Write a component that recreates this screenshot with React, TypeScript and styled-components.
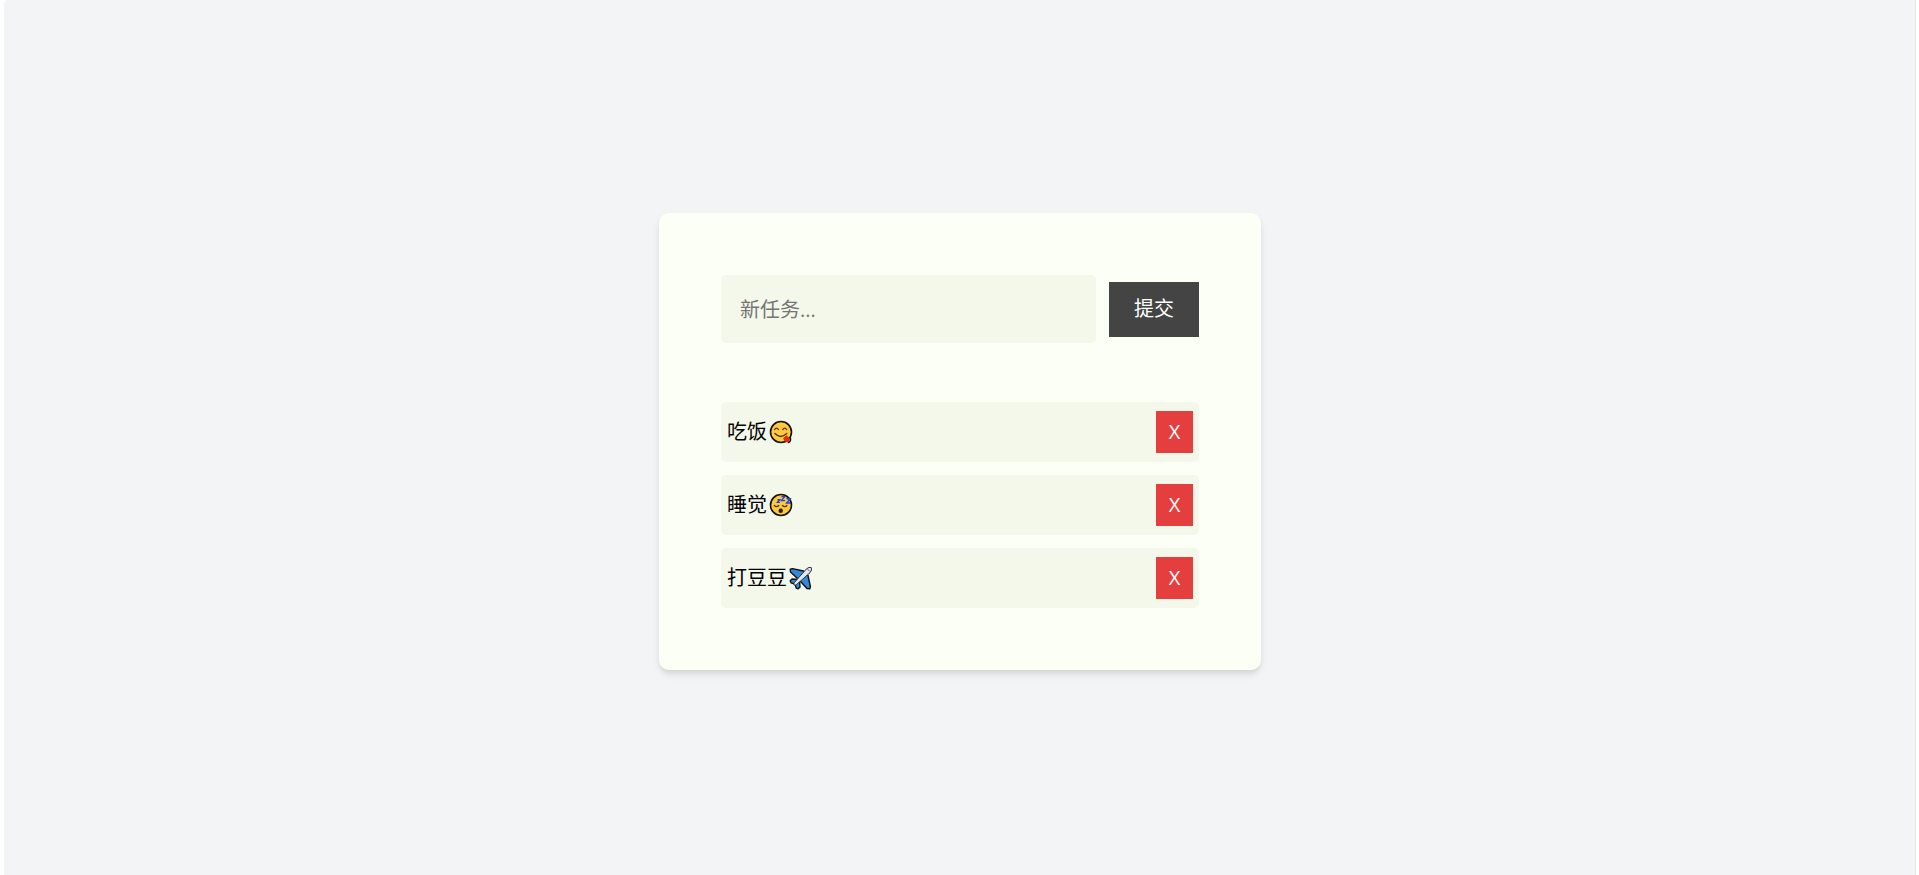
import React, { FormEvent, useState } from "react";
import styled, { createGlobalStyle } from "styled-components";

const GlobalStyle = createGlobalStyle`
  * { box-sizing: border-box; }
  body {
    margin: 0;
    background: #fff;
    color: #000;
    font-family: "Open Sans", "Noto Sans CJK SC", sans-serif;
    font-size: 20px;
    line-height: 30px;
  }
  button, input { font: inherit; }
`;

const Page = styled.main`
  min-height: 100vh;
  margin: 0 3px 0 4px;
  padding: 8px 0 0;
  display: flex;
  align-items: center;
  justify-content: center;
  background: #f3f4f6;
  border-top-left-radius: 4px;
  box-shadow: inset -1px 0 #e5e7eb;
`;

const Card = styled.section`
  width: 602px;
  max-width: 100%;
  padding: 62px;
  background: #fcfff5;
  border-radius: 10px;
  box-shadow: 0 5px 8px -1px rgba(0, 0, 0, 0.1), 0 3px 5px -1px rgba(0, 0, 0, 0.06);
`;

const TaskForm = styled.form`
  display: flex;
  align-items: center;
  gap: 13px;
  margin-bottom: 59px;
`;

const TaskInput = styled.input`
  flex: 1;
  min-width: 0;
  height: 68px;
  padding: 0 19px;
  border: 0;
  border-radius: 5px;
  outline: 0;
  background: #f4f8ea;
  color: #000;
  &::placeholder { color: #757575; opacity: 1; }
`;

const Button = styled.button<{ $danger?: boolean }>`
  flex: none;
  min-width: 37px;
  height: ${(p) => (p.$danger ? "42px" : "55px")};
  padding: ${(p) => (p.$danger ? "0 12px" : "0 25px")};
  border: 0;
  background: ${(p) => (p.$danger ? "#e53e3e" : "#444")};
  color: #fff;
  cursor: pointer;
`;

const TaskList = styled.ul`
  display: flex;
  flex-direction: column;
  gap: 13px;
  margin: 0;
  padding: 0;
  list-style: none;
`;

const TaskRow = styled.li`
  display: flex;
  align-items: center;
  justify-content: space-between;
  height: 60px;
  padding: 0 6px;
  border-radius: 5px;
  background: #f4f8ea;
`;

const TaskLabel = styled.span`
  display: flex;
  align-items: center;
  gap: 2px;
`;

const Emoji = styled.svg`
  width: 24px;
  height: 24px;
  flex: none;
`;

const Yum = () => (
  <Emoji viewBox="0 0 24 24" role="img" aria-label="😋" fill="none" strokeLinecap="round">
    <circle cx="12" cy="12" r="10.5" fill="#ffc83d" stroke="#111" strokeWidth="1.6" />
    <path d="M5.5 9.6q2-3 4 0M13.7 9.6q2-3 4 0" stroke="#4b3305" strokeWidth="1.2" />
    <path d="M6 13.5q5.5 6 11.8 0" stroke="#4b3305" strokeWidth="1.3" />
    <path d="M14 18.2 17.8 15.3 20.6 18.6Q21.2 20.8 19.3 22.2Q17 22.8 15.5 21Z" fill="#e52b12" />
    <path d="M21.5 17.5q.8 4-2.2 5.2" stroke="#111" strokeWidth="1.2" />
  </Emoji>
);

const Sleeping = () => (
  <Emoji viewBox="0 0 24 24" role="img" aria-label="😴" fill="none" strokeLinecap="round">
    <circle cx="12" cy="12" r="10.5" fill="#ffc83d" stroke="#111" strokeWidth="1.6" />
    <path d="M5.3 12.5q2.2 2.4 4.4 0M13.5 12.5q2.2 2.4 4.4 0" stroke="#4b3305" strokeWidth="1.3" />
    <circle cx="11.7" cy="17.8" r="2.2" fill="#2b1d0b" />
    <path d="M8.5 6.8h2.2L8.5 9.4h2.4M12.4 3.6h3.3l-3.3 4h3.6M17.6 5.8h3.6l-3.6 4.2h3.8" stroke="#1746e8" strokeWidth="1.4" strokeLinecap="butt" />
  </Emoji>
);

const Plane = () => (
  <Emoji viewBox="0 0 24 24" role="img" aria-label="✈️" strokeLinejoin="round">
    <g stroke="#111" strokeWidth="1.4">
      <path d="M1.2 3.2 3.5 2.6 14.5 5 16 8 10 14 8 12 1.5 6Z" fill="#3488d8" />
      <path d="M20.8 22.8 21.4 20.5 19 9.5 16 8 10 14 12 16 18 22.5Z" fill="#3488d8" />
      <path d="M1.2 14.8 3 13 9 13.5 10.5 15 11 21 9.2 22.8 7.2 22 6 18 2 16.8Z" fill="#3488d8" />
    </g>
    <path d="M5 19Q4.6 17.5 5.6 16.3L17.3 3Q20.2.5 22.3 1.6Q23.4 3.8 21 6.7L7.7 18.4Q6.2 19.5 5 19Z" fill="#e3e6ec" stroke="#263541" strokeWidth="1" />
    <path d="m18.6 3.2 2.2 2.2" stroke="#536475" strokeWidth="1" />
  </Emoji>
);

const initialTasks = [
  { id: 1, text: "吃饭", icon: <Yum /> },
  { id: 2, text: "睡觉", icon: <Sleeping /> },
  { id: 3, text: "打豆豆", icon: <Plane /> },
];

export default function App() {
  const [tasks, setTasks] = useState<{ id: number; text: string; icon?: React.ReactNode }[]>(initialTasks);
  const [draft, setDraft] = useState("");

  const addTask = (event: FormEvent) => {
    event.preventDefault();
    if (!draft.trim()) return;
    setTasks([...tasks, { id: Date.now(), text: draft.trim() }]);
    setDraft("");
  };

  return (
    <>
      <GlobalStyle />
      <Page>
        <Card>
          <TaskForm onSubmit={addTask}>
            <TaskInput
              aria-label="新任务"
              placeholder="新任务..."
              value={draft}
              onChange={(event) => setDraft(event.target.value)}
            />
            <Button type="submit">提交</Button>
          </TaskForm>
          <TaskList>
            {tasks.map((task) => (
              <TaskRow key={task.id}>
                <TaskLabel>
                  {task.text}
                  {task.icon}
                </TaskLabel>
                <Button
                  $danger
                  type="button"
                  onClick={() => setTasks(tasks.filter((item) => item.id !== task.id))}
                >
                  X
                </Button>
              </TaskRow>
            ))}
          </TaskList>
        </Card>
      </Page>
    </>
  );
}
